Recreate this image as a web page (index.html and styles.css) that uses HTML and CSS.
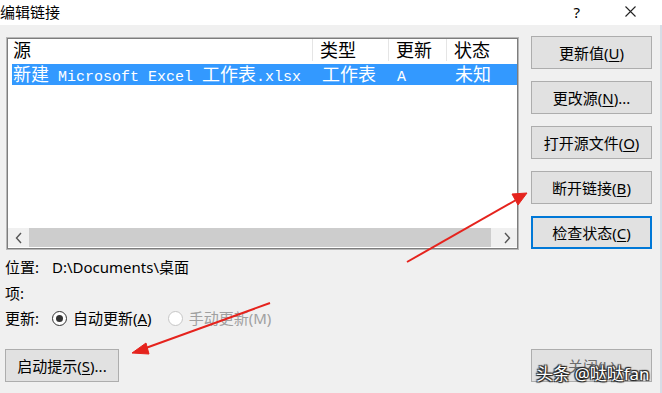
FILE: index.html
```html
<!DOCTYPE html>
<html lang="zh-CN">
<head>
    <meta charset="UTF-8">
    <title>编辑链接</title>
    <link rel="stylesheet" href="styles.css">
</head>
<body>
<div class="window">
    <!-- barra del titolo -->
    <div class="titlebar">
        <span class="title">编辑链接</span>
        <span class="help">?</span>
        <svg class="close-x" width="11" height="11" viewBox="0 0 11 11">
            <path d="M0.5 0.5 L10.5 10.5 M10.5 0.5 L0.5 10.5" stroke="#222" stroke-width="1.1" fill="none"/>
        </svg>
    </div>

    <div class="main">
        <div class="left">
            <div class="listbox">
                <div class="listbox-inner">
                    <div class="list-head">
                        <div class="cell c1">源</div>
                        <div class="cell c2">类型</div>
                        <div class="cell c3">更新</div>
                        <div class="cell c4">状态</div>
                    </div>
                    <div class="list-row selected">
                        <div class="cell c1">新建<span class="mono"> Microsoft Excel </span>工作表<span class="mono">.xlsx</span></div>
                        <div class="cell c2">工作表</div>
                        <div class="cell c3"><span class="mono">A</span></div>
                        <div class="cell c4">未知</div>
                    </div>
                    <div class="list-fill"></div>
                    <div class="hscroll">
                        <div class="arrow">
                            <svg width="8" height="12" viewBox="0 0 8 12"><path d="M6 1 L1.5 6 L6 11" stroke="#555" stroke-width="1.4" fill="none"/></svg>
                        </div>
                        <div class="track"><div class="thumb"></div></div>
                        <div class="arrow">
                            <svg width="8" height="12" viewBox="0 0 8 12"><path d="M2 1 L6.5 6 L2 11" stroke="#555" stroke-width="1.4" fill="none"/></svg>
                        </div>
                    </div>
                </div>
            </div>

            <div class="info">
                <div class="info-line"><span class="label">位置:</span><span>D:\Documents\桌面</span></div>
                <div class="info-line"><span class="label">项:</span></div>
                <div class="info-line">
                    <span class="label">更新:</span>
                    <span class="radio checked"></span><span>自动更新(<u>A</u>)</span>
                    <span class="radio disabled"></span><span class="muted">手动更新(M)</span>
                </div>
            </div>

            <button class="btn btn-prompt">启动提示(<u>S</u>)...</button>
        </div>

        <div class="actions">
            <button class="btn">更新值(<u>U</u>)</button>
            <button class="btn">更改源(<u>N</u>)...</button>
            <button class="btn">打开源文件(<u>O</u>)</button>
            <button class="btn">断开链接(<u>B</u>)</button>
            <button class="btn focused">检查状态(<u>C</u>)</button>
            <button class="btn btn-close">关闭(L)</button>
        </div>
    </div>

    <!-- frecce rosse di annotazione -->
    <svg class="arrows" width="662" height="393" viewBox="0 0 662 393">
        <g stroke="#e5231d" stroke-width="2" fill="#e5231d">
            <line x1="407" y1="262" x2="516" y2="200"/>
            <path d="M527 193 L512 194 L518 205 Z" stroke-width="1"/>
            <line x1="270" y1="303" x2="143" y2="349"/>
            <path d="M132 353 L146 343 L149 354 Z" stroke-width="1"/>
        </g>
    </svg>

    <div class="watermark">头条 @哒哒fan</div>
</div>
</body>
</html>
```

FILE: styles.css
```css
/* finestra di dialogo */
body {
    margin: 0;
    background: #ffffff;
    font-family: "Noto Sans", "Noto Sans CJK SC", sans-serif;
    font-size: 15px;
    color: #000;
}

.window {
    position: relative;
    width: 662px;
    height: 393px;
    background: #f0f0f0;
    overflow: hidden;
}

.titlebar {
    height: 25px;
    background: #fff;
    display: flex;
    align-items: center;
    position: relative;
}
.title {
    font-size: 15px;
    line-height: 22px;
    margin-top: -2px;
    flex: 1;
}
.help {
    font-size: 15px;
    line-height: 20px;
    margin-right: 45px;
    margin-top: -2px;
}
.close-x {
    margin-right: 26px;
    margin-top: -3px;
}

.main {
    display: flex;
    height: 368px;
    box-sizing: border-box;
    padding: 0 0 11px 6px;
    border-right: 2px solid #d6dde6;
}

.left {
    width: 513px;
    display: flex;
    flex-direction: column;
    padding-top: 12px;
}

.listbox {
    height: 213px;
    box-sizing: border-box;
    border: 1px solid #b8b8b8;
    background: #fff;
}
.listbox-inner {
    height: 100%;
    box-sizing: border-box;
    border: 1px solid #7d7d7d;
    display: flex;
    flex-direction: column;
    padding-left: 4px;
}

.list-head, .list-row {
    display: grid;
    grid-template-columns: 301px 76px 58px 69px;
    font-size: 18px;
}
.list-head {
    height: 22px;
    line-height: 22px;
}
.list-head .cell {
    border-right: 1px solid #e5e5e5;
    padding-left: 7px;
}
.list-head .c1 { padding-left: 1px; }
.list-head .c4 { border-right: none; }

.list-row {
    margin-top: 3px;
    height: 21px;
    line-height: 21px;
}
.list-row.selected {
    background: #3399ff;
    color: #fff;
}
.list-row .c1 { padding-left: 1px; }
.list-row .c2 { padding-left: 9px; }
.list-row .c3 { padding-left: 8px; }
.list-row .c4 { padding-left: 8px; }
.cell {
    white-space: nowrap;
}
.mono {
    font-family: "Liberation Mono", monospace;
    font-size: 15px;
    white-space: pre;
}

.list-fill { flex: 1; }

.hscroll {
    height: 19px;
    margin-left: -4px;
    margin-bottom: 1px;
    display: flex;
    background: #f0f0f0;
}
.hscroll .arrow {
    width: 21px;
    display: flex;
    align-items: center;
    justify-content: center;
}
.hscroll .track {
    flex: 1;
    padding-right: 5px;
}
.hscroll .thumb {
    height: 100%;
    background: #cdcdcd;
}

.info {
    padding-top: 5px;
}
.info-line {
    height: 25.5px;
    line-height: 25px;
    display: flex;
    align-items: center;
    margin-left: -1px;
}
.info-line .label {
    width: 47px;
}
.radio {
    width: 13px;
    height: 13px;
    border-radius: 50%;
    border: 1px solid #333;
    margin: 0 6px 0 0;
    position: relative;
    background: #fff;
}
.radio.checked::after {
    content: "";
    position: absolute;
    left: 3px;
    top: 3px;
    width: 7px;
    height: 7px;
    border-radius: 50%;
    background: #333;
}
.radio.disabled {
    border-color: #c6c6c6;
    margin-left: 16px;
}
.muted { color: #a0a0a0; }

.btn {
    height: 33px;
    box-sizing: border-box;
    background: #e1e1e1;
    border: 1px solid #adadad;
    font-family: "Noto Sans", "Noto Sans CJK SC", sans-serif;
    font-size: 15px;
    color: #000;
    padding: 0;
    line-height: 30px;
}
.btn u { text-underline-offset: 2px; }

.btn-prompt {
    margin-top: auto;
    width: 114px;
    margin-left: -1px;
}

.actions {
    margin-left: 12px;
    width: 121px;
    display: flex;
    flex-direction: column;
    gap: 12px;
    padding-top: 11px;
}
.btn.focused {
    border-color: #0078d7;
    box-shadow: inset 0 0 0 1px #0078d7;
}
.btn-close {
    margin-top: auto;
    color: #6d6d6d;
}

.arrows {
    position: absolute;
    left: 0;
    top: 0;
}

.watermark {
    position: absolute;
    left: 536px;
    top: 363px;
    font-size: 17px;
    line-height: 22px;
    color: #fff;
    text-shadow: 0 0 1px #222, 1px 1px 1px #222, -1px -1px 1px #222, 1px -1px 1px #222, -1px 1px 1px #222;
}
```
